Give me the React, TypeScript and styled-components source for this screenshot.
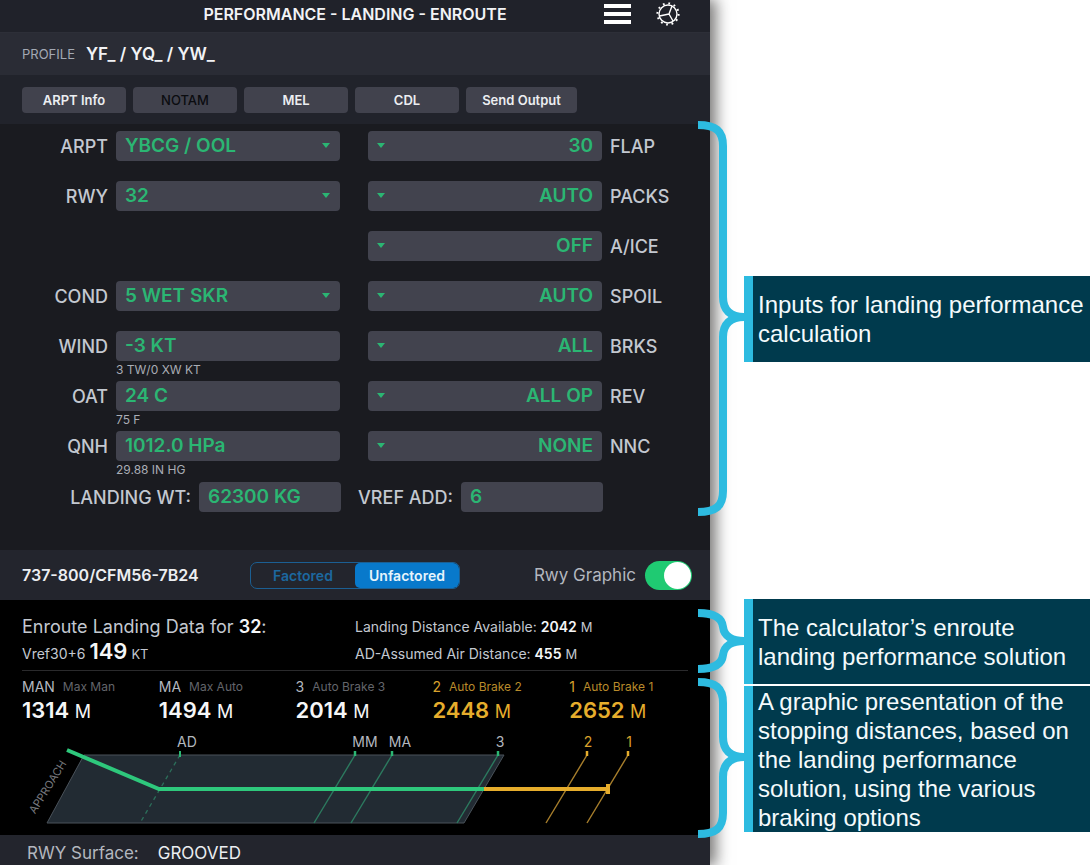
import React, { useState } from "react";
import styled, { createGlobalStyle } from "styled-components";

const GlobalStyle = createGlobalStyle`
  * { box-sizing: border-box; }
  body { margin: 0; background: #ffffff; font-family: Inter, "Liberation Sans", sans-serif; }
  button, input, select { font: inherit; margin: 0; }
  h1, h2, p, dl, dd, dt { margin: 0; }
`;

const green = "#2bb673";
const amber = "#e6ad2c";
const cyan = "#2dbbe0";

const Page = styled.div`
  display: grid;
  grid-template-columns: 71fr 38fr;
  min-height: 100vh;
  overflow: hidden;
`;

const Device = styled.main`
  display: flex;
  flex-direction: column;
  background: #1a1b20;
  color: #c3c8d0;
  box-shadow: 5px 0 14px 1px rgba(30, 28, 26, 0.6);
`;

const TitleBar = styled.header`
  display: grid;
  grid-template-columns: 1fr auto 1fr;
  align-items: center;
  height: 33px;
  padding: 0 30px 5px;
  background: #20222a;
  border-bottom: 1px solid #2d2f38;
`;

const Title = styled.h1`
  grid-column: 2;
  font-size: 16px;
  font-weight: 600;
  color: #f2f3f5;
  white-space: nowrap;
`;

const TitleActions = styled.div`
  display: flex;
  justify-content: flex-end;
  align-items: center;
  gap: 25px;
`;

const IconButton = styled.button`
  display: flex;
  padding: 0;
  border: 0;
  background: none;
  color: #ffffff;
`;

const ProfileBar = styled.section`
  display: flex;
  align-items: center;
  gap: 11px;
  height: 42px;
  padding: 0 22px;
  background: #2a2c35;
  font-size: 17px;
  font-weight: 600;
  color: #f2f3f5;
`;

const ProfileLabel = styled.span`
  font-size: 13px;
  font-weight: 400;
  color: #a3a9b4;
`;

const ActionBar = styled.nav`
  display: flex;
  gap: 7px;
  padding: 12px 22px 11px;
  background: #21232b;
`;

const ActionButton = styled.button<{ $wide?: boolean }>`
  width: ${(p) => (p.$wide ? 111 : 104)}px;
  height: 26px;
  padding: 0;
  border: 0;
  border-radius: 4px;
  background: #41424d;
  color: #eceef1;
  font-size: 13px;
  font-weight: 600;
  &:disabled { color: #0b0c10; font-weight: 500; }
`;

const Form = styled.form`
  flex: none;
  padding: 7px 0 38px;
`;

const FieldRow = styled.div`
  display: grid;
  grid-template-columns: 108px 224fr 12px 234fr 100px;
  column-gap: 8px;
  grid-template-rows: 30px 20px;
  align-items: center;
`;

const WeightRow = styled.div`
  display: grid;
  grid-template-columns: 191px 142fr 104px 142fr 99px;
  column-gap: 8px;
  align-items: center;
  margin-top: 1px;
`;

const FieldLabel = styled.label<{ $col: number; $end?: boolean }>`
  grid-column: ${(p) => p.$col};
  grid-row: 1;
  text-align: ${(p) => (p.$end ? "right" : "left")};
  font-size: 18px;
  font-weight: 500;
  white-space: nowrap;
`;

const FieldBox = styled.div<{ $col: number }>`
  grid-column: ${(p) => p.$col};
  grid-row: 1;
  position: relative;
`;

const fieldLook = `
  display: block;
  width: 100%;
  height: 30px;
  padding: 0 9px;
  border: 0;
  border-radius: 4px;
  background: #42434e;
  color: ${green};
  font-size: 19px;
  font-weight: 600;
  line-height: 30px;
`;

const TextField = styled.input`${fieldLook}`;

const SelectField = styled.select<{ $end?: boolean }>`
  ${fieldLook}
  appearance: none;
  text-align-last: ${(p) => (p.$end ? "right" : "left")};
`;

const Caret = styled.svg<{ $start?: boolean }>`
  position: absolute;
  top: 12px;
  ${(p) => (p.$start ? "left: 9px;" : "right: 10px;")}
  pointer-events: none;
`;

const Hint = styled.p`
  grid-column: 2;
  grid-row: 2;
  align-self: start;
  font-size: 12px;
  line-height: 17px;
  color: #a9adb5;
`;

const ModeBar = styled.section`
  display: grid;
  grid-template-columns: 1fr auto 1fr;
  align-items: center;
  height: 50px;
  padding: 0 18px;
  background: #23252d;
`;

const Aircraft = styled.span`
  padding-left: 4px;
  font-size: 16px;
  font-weight: 600;
  color: #eceef1;
  white-space: nowrap;
`;

const Segments = styled.div`
  display: flex;
  width: 210px;
  height: 27px;
  border: 1px solid #1b5f93;
  border-radius: 7px;
  overflow: hidden;
`;

const Segment = styled.button`
  flex: 1;
  padding: 0;
  border: 0;
  border-radius: 5px;
  background: transparent;
  color: #1c689f;
  font-size: 14px;
  font-weight: 600;
  &[aria-pressed="true"] { background: #0879cb; color: #e6f4fc; }
`;

const SwitchLabel = styled.label`
  display: flex;
  align-items: center;
  justify-content: flex-end;
  gap: 9px;
  font-size: 17px;
  color: #b3b7bf;
  white-space: nowrap;
`;

const Switch = styled.input`
  appearance: none;
  width: 47px;
  height: 29px;
  padding: 1px;
  border-radius: 15px;
  background: #4a4c55;
  display: flex;
  &::before {
    content: "";
    width: 27px;
    height: 27px;
    border-radius: 50%;
    background: #ffffff;
  }
  &:checked { background: #1fca72; justify-content: flex-end; }
`;

const Results = styled.section`
  padding: 14px 22px 0;
  background: #000000;
`;

const Summary = styled.div`
  display: grid;
  grid-template-columns: 1fr 1fr;
  align-content: start;
  row-gap: 1px;
  height: 57px;
  border-bottom: 1px solid #2a2a2c;
`;

const SummaryLine = styled.p<{ $size: number }>`
  font-size: ${(p) => p.$size}px;
  line-height: 26px;
  white-space: nowrap;
  strong { font-weight: 600; color: #f5f6f7; }
`;

const BigValue = styled.strong`
  font-size: 22px;
  line-height: 16px;
`;

const Unit = styled.span`
  font-size: 13px;
`;

const Distances = styled.dl`
  display: grid;
  grid-template-columns: repeat(5, 1fr);
  margin-right: -18px;
  padding: 8px 0 3px;
`;

const Distance = styled.div<{ $amber?: boolean }>`
  color: ${(p) => (p.$amber ? amber : "#f5f6f7")};
  white-space: nowrap;
`;

const DistanceName = styled.dt<{ $amber?: boolean }>`
  display: flex;
  align-items: center;
  gap: 8px;
  font-size: 14px;
  line-height: 16px;
  color: ${(p) => (p.$amber ? "#d9a12c" : "#b3b7bf")};
`;

const DistanceNote = styled.span<{ $amber?: boolean }>`
  font-size: 12px;
  color: ${(p) => (p.$amber ? "#b98b2b" : "#63656b")};
`;

const DistanceValue = styled.dd`
  font-size: 22px;
  font-weight: 600;
  line-height: 30px;
`;

const DistanceUnit = styled.span`
  font-size: 18px;
  font-weight: 400;
`;

const Runway = styled.svg`
  display: block;
  width: calc(100% + 44px);
  margin: 0 -22px;
`;

const Surface = styled.footer`
  display: flex;
  flex: 1;
  gap: 19px;
  padding: 6px 27px 0;
  background: #23252d;
  font-size: 17px;
  line-height: 24px;
  color: #b3b7bf;
`;

const SurfaceValue = styled.span`
  color: #eceef1;
`;

const Notes = styled.aside`
  position: relative;
  display: flex;
  flex-direction: column;
  padding: 276px 0 31px 34px;
`;

const Note = styled.section<{ $height: number; $gap?: number }>`
  position: relative;
  display: flex;
  align-items: center;
  min-height: ${(p) => p.$height}px;
  margin-top: ${(p) => p.$gap ?? 0}px;
  padding-left: 5px;
  border-left: 9px solid ${cyan};
  background: #003a4d;
  color: #f4fafc;
  font-family: "Liberation Sans", Arial, sans-serif;
  font-size: 24px;
  line-height: 29px;
`;

const Brace = styled.svg<{ $top: number }>`
  position: absolute;
  top: ${(p) => p.$top}px;
  left: -55px;
  fill: none;
  stroke: ${cyan};
  stroke-width: 8;
`;

type Field = { label: string; value: string; hint?: string; select?: boolean };

const rows: { left?: Field; right: Field }[] = [
  { left: { label: "ARPT", value: "YBCG / OOL", select: true }, right: { label: "FLAP", value: "30" } },
  { left: { label: "RWY", value: "32", select: true }, right: { label: "PACKS", value: "AUTO" } },
  { right: { label: "A/ICE", value: "OFF" } },
  { left: { label: "COND", value: "5 WET SKR", select: true }, right: { label: "SPOIL", value: "AUTO" } },
  { left: { label: "WIND", value: "-3 KT", hint: "3 TW/0 XW KT" }, right: { label: "BRKS", value: "ALL" } },
  { left: { label: "OAT", value: "24 C", hint: "75 F" }, right: { label: "REV", value: "ALL OP" } },
  { left: { label: "QNH", value: "1012.0 HPa", hint: "29.88 IN HG" }, right: { label: "NNC", value: "NONE" } },
];

const distances = [
  { code: "MAN", note: "Max Man", value: "1314" },
  { code: "MA", note: "Max Auto", value: "1494" },
  { code: "3", note: "Auto Brake 3", value: "2014" },
  { code: "2", note: "Auto Brake 2", value: "2448", over: true },
  { code: "1", note: "Auto Brake 1", value: "2652", over: true },
];

const markers = [
  { label: "MM", x: 355, text: 365 },
  { label: "MA", x: 392, text: 400 },
  { label: "3", x: 498, text: 500 },
  { label: "2", x: 587, text: 588, over: true },
  { label: "1", x: 628, text: 629, over: true },
];

function Select({ id, value, end }: { id: string; value: string; end?: boolean }) {
  return (
    <>
      <SelectField id={id} $end={end} defaultValue={value}>
        <option>{value}</option>
      </SelectField>
      <Caret $start={end} width="8" height="6" viewBox="0 0 8 6" aria-hidden="true">
        <path d="M0 0h8L4 5z" fill={green} />
      </Caret>
    </>
  );
}

function GearIcon() {
  return (
    <svg width="24" height="24" viewBox="0 0 24 24" fill="none" stroke="currentColor" strokeWidth="1.4" aria-hidden="true">
      <circle cx="12" cy="12" r="9" />
      <circle cx="12" cy="12" r="10.6" strokeWidth="2" strokeDasharray="1.8 3.75" />
      <path d="M13 12L3.5 14M13 12L16 4M13 12L17 19" />
    </svg>
  );
}

function RunwayGraphic() {
  return (
    <Runway viewBox="0 730 710 105" role="img" aria-label="Runway stopping distances">
      <path d="M84 755H504L464 823H47Z" fill="#222b33" stroke="#4a525a" strokeWidth="1" />
      <path d="M180 755L140 823" stroke="#2c6f5a" strokeWidth="1.3" strokeDasharray="4 4" />
      <path d="M180 751v6" stroke={green} strokeWidth="2" />
      <text x="187" y="747" textAnchor="middle" fontSize="14" fill="#b3b7bf">AD</text>
      {markers.map((m) => (
        <g key={m.label}>
          <path
            d={`M${m.x} 755l-41 68`}
            stroke={m.over ? "#a87f2c" : "#2c7a5f"}
            strokeWidth="1.4"
          />
          <path d={`M${m.x} 751v5`} stroke={m.over ? amber : green} strokeWidth="2.5" />
          <text x={m.text} y="747" textAnchor="middle" fontSize="14" fill={m.over ? "#d9a12c" : "#b3b7bf"}>
            {m.label}
          </text>
        </g>
      ))}
      <path d="M484 789H608" stroke={amber} strokeWidth="4" />
      <path d="M608 784v10" stroke={amber} strokeWidth="4" />
      <path d="M67 750L159 789H484" fill="none" stroke="#2ec87c" strokeWidth="4" />
      <text transform="translate(51 789) rotate(-58)" textAnchor="middle" fontSize="11" fill="#77797e">APPROACH</text>
    </Runway>
  );
}

export default function App() {
  const [factored, setFactored] = useState(false);
  const [graphic, setGraphic] = useState(true);

  return (
    <>
      <GlobalStyle />
      <Page>
        <Device>
          <TitleBar>
            <Title>PERFORMANCE - LANDING - ENROUTE</Title>
            <TitleActions>
              <IconButton aria-label="Menu">
                <svg width="27" height="20" viewBox="0 0 27 20" aria-hidden="true">
                  <path d="M0 0h27v4H0zM0 8h27v4H0zM0 16h27v4H0z" fill="currentColor" />
                </svg>
              </IconButton>
              <IconButton aria-label="Settings">
                <GearIcon />
              </IconButton>
            </TitleActions>
          </TitleBar>
          <ProfileBar>
            <ProfileLabel>PROFILE</ProfileLabel>
            <span>YF_ / YQ_ / YW_</span>
          </ProfileBar>
          <ActionBar>
            <ActionButton>ARPT Info</ActionButton>
            <ActionButton disabled>NOTAM</ActionButton>
            <ActionButton>MEL</ActionButton>
            <ActionButton>CDL</ActionButton>
            <ActionButton $wide>Send Output</ActionButton>
          </ActionBar>
          <Form>
            {rows.map(({ left, right }) => (
              <FieldRow key={right.label}>
                {left && (
                  <>
                    <FieldLabel $col={1} $end htmlFor={left.label}>{left.label}</FieldLabel>
                    <FieldBox $col={2}>
                      {left.select ? (
                        <Select id={left.label} value={left.value} />
                      ) : (
                        <TextField id={left.label} defaultValue={left.value} />
                      )}
                    </FieldBox>
                    {left.hint && <Hint>{left.hint}</Hint>}
                  </>
                )}
                <FieldBox $col={4}>
                  <Select id={right.label} value={right.value} end />
                </FieldBox>
                <FieldLabel $col={5} htmlFor={right.label}>{right.label}</FieldLabel>
              </FieldRow>
            ))}
            <WeightRow>
              <FieldLabel $col={1} $end htmlFor="weight">LANDING WT:</FieldLabel>
              <FieldBox $col={2}>
                <TextField id="weight" defaultValue="62300 KG" />
              </FieldBox>
              <FieldLabel $col={3} $end htmlFor="vref">VREF ADD:</FieldLabel>
              <FieldBox $col={4}>
                <TextField id="vref" defaultValue="6" />
              </FieldBox>
            </WeightRow>
          </Form>
          <ModeBar>
            <Aircraft>737-800/CFM56-7B24</Aircraft>
            <Segments>
              <Segment aria-pressed={factored} onClick={() => setFactored(true)}>Factored</Segment>
              <Segment aria-pressed={!factored} onClick={() => setFactored(false)}>Unfactored</Segment>
            </Segments>
            <SwitchLabel>
              Rwy Graphic
              <Switch type="checkbox" checked={graphic} onChange={(e) => setGraphic(e.target.checked)} />
            </SwitchLabel>
          </ModeBar>
          <Results>
            <Summary>
              <SummaryLine $size={18}>Enroute Landing Data for <strong>32</strong>:</SummaryLine>
              <SummaryLine $size={14}>
                Landing Distance Available: <strong>2042</strong> <Unit>M</Unit>
              </SummaryLine>
              <SummaryLine $size={14}>
                Vref30+6 <BigValue>149</BigValue> <Unit>KT</Unit>
              </SummaryLine>
              <SummaryLine $size={14}>
                AD-Assumed Air Distance: <strong>455</strong> <Unit>M</Unit>
              </SummaryLine>
            </Summary>
            <Distances>
              {distances.map((d) => (
                <Distance key={d.code} $amber={d.over}>
                  <DistanceName $amber={d.over}>
                    {d.code}
                    <DistanceNote $amber={d.over}>{d.note}</DistanceNote>
                  </DistanceName>
                  <DistanceValue>
                    {d.value} <DistanceUnit>M</DistanceUnit>
                  </DistanceValue>
                </Distance>
              ))}
            </Distances>
            {graphic && <RunwayGraphic />}
          </Results>
          <Surface>
            <span>RWY Surface:</span>
            <SurfaceValue>GROOVED</SurfaceValue>
          </Surface>
        </Device>
        <Notes>
          <Note $height={86}>
            <Brace $top={-155} width="46" height="395" viewBox="0 0 46 395" aria-hidden="true">
              <path d="M0 4C18 4 25 10 25 25V176C25 189 32 196 46 196C32 196 25 203 25 216V370C25 385 18 391 0 391" />
            </Brace>
            <p>Inputs for landing performance calculation</p>
          </Note>
          <Note $height={85} $gap={237}>
            <Brace $top={10} width="46" height="64" viewBox="0 0 46 64" aria-hidden="true">
              <path d="M0 4C16 4 24 9 25 18C26 27 34 32 46 32C34 32 26 37 25 46C24 55 16 60 0 60" />
            </Brace>
            <p>The calculator’s enroute landing performance solution</p>
          </Note>
          <Note $height={146} $gap={2}>
            <Brace $top={-8} width="46" height="160" viewBox="0 0 46 160" aria-hidden="true">
              <path d="M0 4C18 4 25 10 25 25V59C25 72 32 79 46 79C32 79 25 86 25 99V135C25 150 18 156 0 156" />
            </Brace>
            <p>A graphic presentation of the stopping distances, based on the landing performance solution, using the various braking options</p>
          </Note>
        </Notes>
      </Page>
    </>
  );
}
